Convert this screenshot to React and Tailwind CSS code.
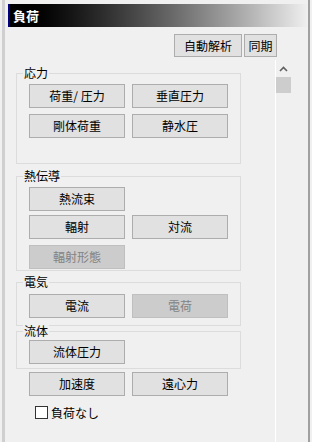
import React from "react";

const FONT = "font-['Meiryo_UI','Noto_Sans_CJK_JP',sans-serif]";

function Btn({ label, disabled, className = "" }) {
  return (
    <div
      className={
        "flex items-center justify-center w-[96px] h-[24px] border text-[12px] leading-none " +
        (disabled
          ? "bg-[#cccccc] border-[#bfbfbf] text-[#838383] "
          : "bg-[#e1e1e1] border-[#adadad] text-black ") +
        className
      }
    >
      {label}
    </div>
  );
}

function Group({ label, className = "", children }) {
  return (
    <div className={"relative ml-[8px] w-[225px] border border-[#dcdcdc] pl-[12px] " + className}>
      <span className="absolute left-[6px] top-[-8px] bg-[#f0f0f0] px-[1px] text-[12px] leading-[14px] text-black">
        {label}
      </span>
      {children}
    </div>
  );
}

export default function App() {
  return (
    <div className={"w-[312px] h-[442px] bg-[#f0f0f0] flex overflow-hidden " + FONT}>
      {/* left frame */}
      <div className="w-[2px]" />
      <div className="w-[3px] bg-[#cfcfcf]" />
      <div className="w-[3px]" />

      <div className="w-[300px] flex flex-col pt-[4px]">
        {/* title */}
        <div className="h-[23px] flex items-center border-l-2 border-[#000080] bg-gradient-to-r from-black to-[#f0f0f0] pl-[3px]">
          <span className="text-white font-bold text-[13px] leading-none">負荷</span>
        </div>

        {/* top buttons */}
        <div className="flex gap-[2px] mt-[7px] pl-[166px] h-[23px]">
          <div className="flex items-center justify-center w-[68px] h-[23px] border border-[#adadad] bg-[#e1e1e1] text-[12px] leading-none">
            自動解析
          </div>
          <div className="flex items-center justify-center w-[33px] h-[23px] border border-[#adadad] bg-[#e1e1e1] text-[12px] leading-none">
            同期
          </div>
        </div>

        {/* scroll area */}
        <div className="flex flex-1 mt-[3px]">
          <div className="w-[267px] flex flex-col">
            <Group label="応力" className="mt-[13px] pt-[10px] pb-[25px]">
              <div className="grid grid-cols-[96px_96px] gap-x-[7px] gap-y-[6px]">
                <Btn label="荷重/ 圧力" />
                <Btn label="垂直圧力" />
                <Btn label="剛体荷重" />
                <Btn label="静水圧" />
              </div>
            </Group>

            <Group label="熱伝導" className="mt-[12px] pt-[10px] pb-[1px]">
              <Btn label="熱流束" />
              <div className="flex gap-[7px] mt-[4px]">
                <Btn label="輻射" />
                <Btn label="対流" />
              </div>
              <Btn label="輻射形態" disabled className="mt-[6px]" />
            </Group>

            <Group label="電気" className="mt-[11px] pt-[11px] pb-[7px]">
              <div className="flex gap-[7px]">
                <Btn label="電流" />
                <Btn label="電荷" disabled />
              </div>
            </Group>

            <Group label="流体" className="mt-[5px] pt-[8px] pb-[4px]">
              <Btn label="流体圧力" />
            </Group>

            <div className="flex gap-[7px] mt-[3px] ml-[21px]">
              <Btn label="加速度" />
              <Btn label="遠心力" />
            </div>

            <div className="flex items-center mt-[10px] ml-[27px]">
              <div className="w-[13px] h-[13px] border border-[#333333] bg-white" />
              <span className="ml-[3px] text-[12px] leading-none text-black">負荷なし</span>
            </div>
          </div>

          <div className="w-[1px] bg-white" />

          {/* scrollbar */}
          <div className="w-[32px] flex flex-col">
            <div className="w-[15px] h-[17px] flex items-center justify-center">
              <svg width="9" height="6" viewBox="0 0 9 6">
                <path d="M1 5 L4.5 1.5 L8 5" fill="none" stroke="#606060" strokeWidth="1.6" />
              </svg>
            </div>
            <div className="w-[15px] h-[16px] bg-[#cdcdcd]" />
          </div>
        </div>
      </div>

      {/* right frame */}
      <div className="w-[2px] bg-[#a0a0a0]" />
      <div className="w-[2px]" />
    </div>
  );
}
